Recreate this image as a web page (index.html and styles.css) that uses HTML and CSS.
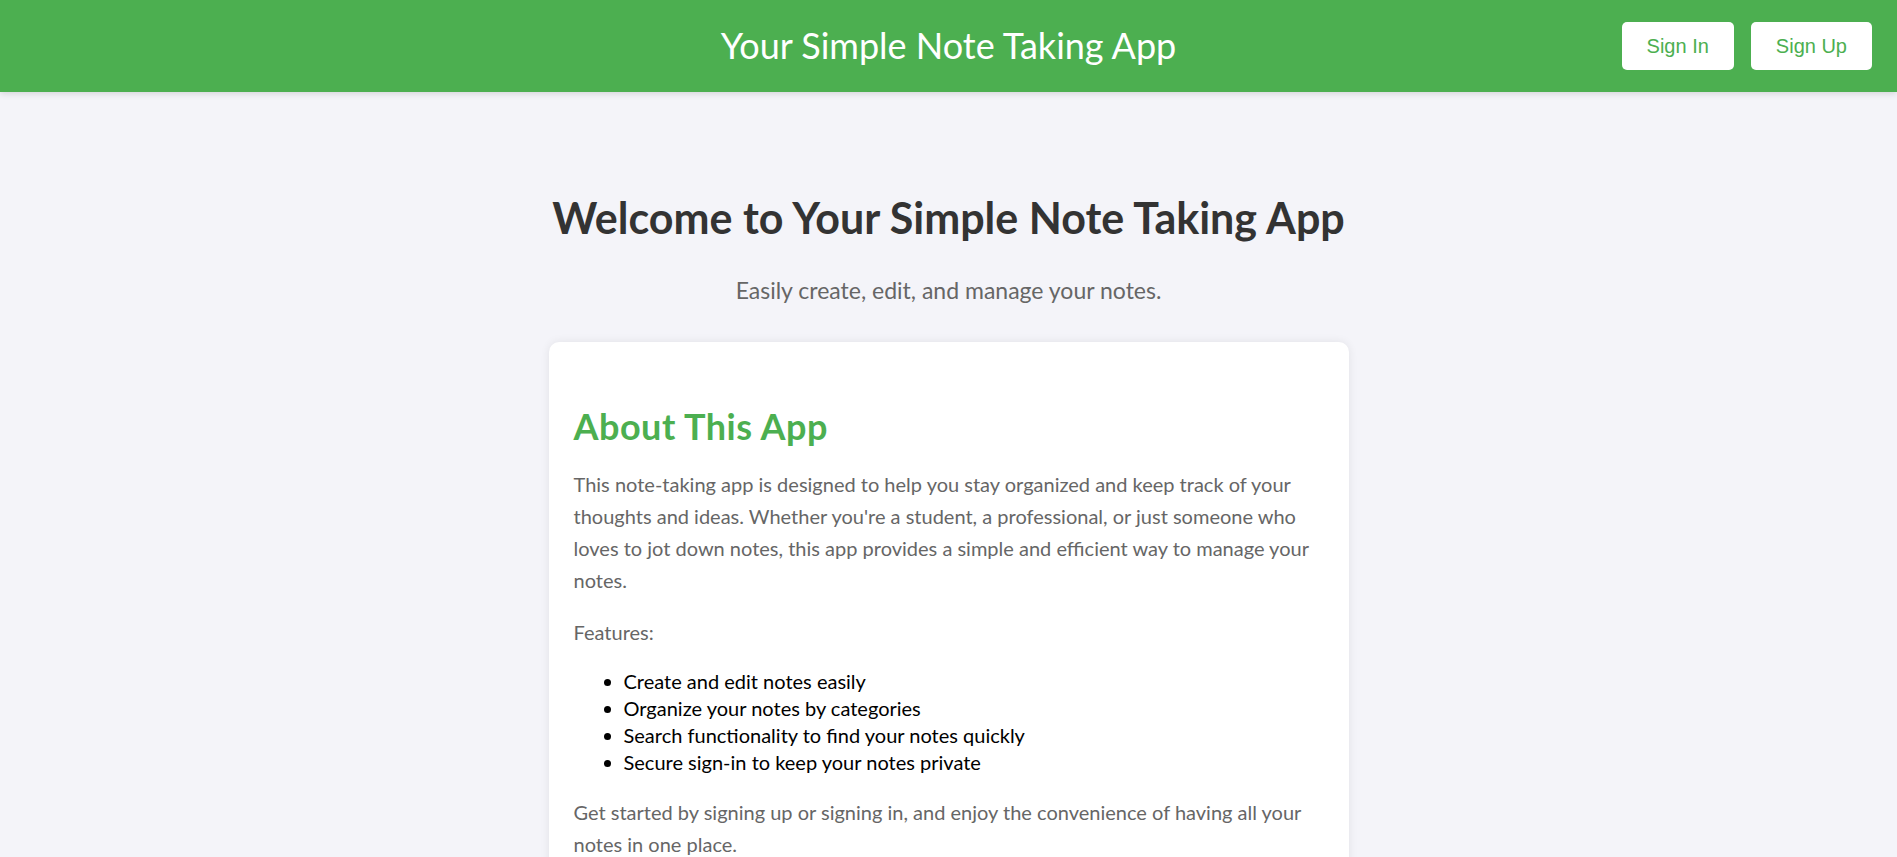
FILE: index.html
```html
<!DOCTYPE html>
<html lang="en">
<head>
<meta charset="UTF-8">
<title>Your Simple Note Taking App</title>
<link rel="stylesheet" href="styles.css">
</head>
<body>
<header class="topbar">
  <div class="topbar-side"></div>
  <h1 class="topbar-title">Your Simple Note Taking App</h1>
  <nav class="topbar-actions">
    <button class="btn">Sign In</button>
    <button class="btn">Sign Up</button>
  </nav>
</header>
<main class="main">
  <h1 class="welcome">Welcome to Your Simple Note Taking App</h1>
  <p class="subtitle">Easily create, edit, and manage your notes.</p>
  <section class="card">
    <h2 class="card-title">About This App</h2>
    <p class="text">This note-taking app is designed to help you stay organized and keep track of your thoughts and ideas. Whether you're a student, a professional, or just someone who loves to jot down notes, this app provides a simple and efficient way to manage your notes.</p>
    <p class="text">Features:</p>
    <ul class="features">
      <li>Create and edit notes easily</li>
      <li>Organize your notes by categories</li>
      <li>Search functionality to find your notes quickly</li>
      <li>Secure sign-in to keep your notes private</li>
    </ul>
    <p class="text">Get started by signing up or signing in, and enjoy the convenience of having all your notes in one place.</p>
  </section>
</main>
</body>
</html>
```

FILE: styles.css
```css
* { box-sizing: border-box; }

body {
  margin: 0;
  background: #f4f4f9;
  font-family: Lato, "Noto Sans", sans-serif;
  color: #000;
}

.topbar {
  height: 92px;
  background: #4caf50;
  display: grid;
  grid-template-columns: 1fr auto 1fr;
  align-items: center;
  padding: 0 25px;
  box-shadow: 0 2px 6px rgba(0, 0, 0, 0.12);
  position: relative;
}

.topbar-title {
  margin: 0;
  font-size: 36px;
  font-weight: 400;
  color: #fff;
  line-height: 1.2;
}

.topbar-actions {
  display: flex;
  justify-content: flex-end;
  gap: 17px;
}

.btn {
  background: #fff;
  color: #4caf50;
  border: none;
  border-radius: 5px;
  font-family: "Liberation Sans", Arial, sans-serif;
  font-size: 20px;
  line-height: 23px;
  padding: 12.5px 25px;
  cursor: pointer;
}

.main {
  width: 800px;
  margin: 0 auto;
  padding-top: 102px;
}

.welcome {
  margin: 0;
  text-align: center;
  font-size: 43px;
  font-weight: 700;
  line-height: 48px;
  color: #333;
}

.subtitle {
  margin: 35px 0 0;
  text-align: center;
  font-size: 23px;
  line-height: 26px;
  color: #666;
}

.card {
  margin-top: 39px;
  background: #fff;
  border-radius: 10px;
  box-shadow: 0 0 10px rgba(0, 0, 0, 0.08);
  padding: 25px 25px 30px;
}

.card-title {
  margin: 41px 0 24px;
  font-size: 36px;
  line-height: 36px;
  font-weight: 700;
  letter-spacing: 0.5px;
  color: #4caf50;
}

.text {
  margin: 0 0 20px;
  font-size: 20px;
  line-height: 32px;
  color: #666;
}

.features {
  margin: 0 0 20px;
  padding-left: 50px;
  font-size: 20px;
  line-height: 27px;
  color: #000;
}
```
